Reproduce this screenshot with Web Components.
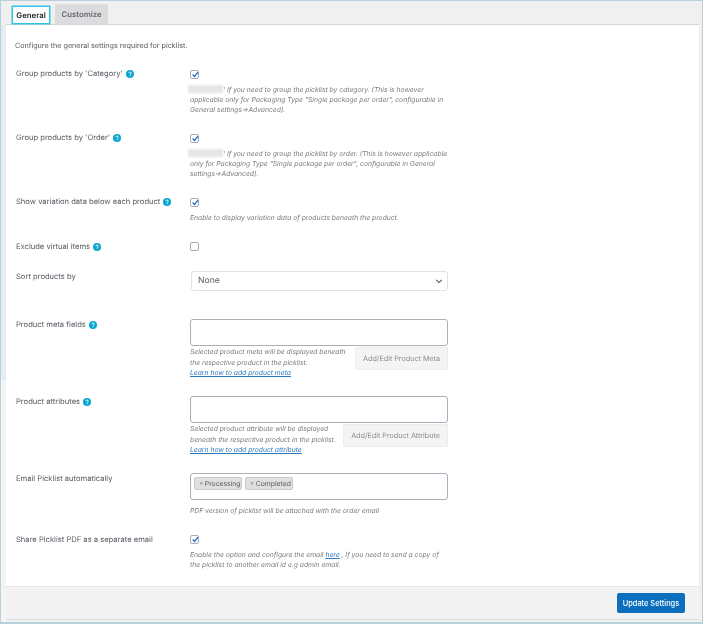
<!DOCTYPE html>
<html>
<head>
<meta charset="utf-8">
<title>Picklist settings</title>
<style>
html, body { margin: 0; padding: 0; background: #f0f0f1; }
body { font-family: Inter, "Liberation Sans", sans-serif; color: #555b62; text-rendering: geometricPrecision; }
</style>
</head>
<body>
<settings-page>
    <settings-tabs slot="tabs"></settings-tabs>
    <settings-panel>
        <p class="intro" slot="intro">Configure the general settings required for picklist.</p>

        <setting-row label="Group products by 'Category'" help gap="17">
            <check-box checked></check-box>
            <field-note><blur-patch></blur-patch>' If you need to group the picklist by category. (This is however applicable only for Packaging Type "Single package per order", configurable in General settings-&gt;Advanced).</field-note>
        </setting-row>

        <setting-row label="Group products by 'Order'" help gap="17">
            <check-box checked></check-box>
            <field-note><blur-patch></blur-patch>' If you need to group the picklist by order. (This is however applicable only for Packaging Type "Single package per order", configurable in General settings-&gt;Advanced).</field-note>
        </setting-row>

        <setting-row label="Show variation data below each product" help gap="18">
            <check-box checked></check-box>
            <field-note>Enable to display variation data of products beneath the product.</field-note>
        </setting-row>

        <setting-row label="Exclude virtual items" help gap="18">
            <check-box></check-box>
        </setting-row>

        <setting-row label="Sort products by" gap="28">
            <select-box value="None"></select-box>
        </setting-row>

        <setting-row label="Product meta fields" help gap="17">
            <text-field></text-field>
            <note-action action="Add/Edit Product Meta" link="Learn how to add product meta" reserve="5">Selected product meta will be displayed beneath the respective product in the picklist.</note-action>
        </setting-row>

        <setting-row label="Product attributes" help gap="17">
            <text-field></text-field>
            <note-action action="Add/Edit Product Attribute" link="Learn how to add product attribute">Selected product attribute will be displayed beneath the respective product in the picklist.</note-action>
        </setting-row>

        <setting-row label="Email Picklist automatically" gap="17">
            <text-field>
                <status-tag>Processing</status-tag>
                <status-tag>Completed</status-tag>
            </text-field>
            <field-note>PDF version of picklist will be attached with the order email</field-note>
        </setting-row>

        <setting-row label="Share Picklist PDF as a separate email" gap="16">
            <check-box checked></check-box>
            <field-note>Enable the option and configure the email <a href="#">here</a> , If you need to send a copy of the picklist to another email id e.g admin email.</field-note>
        </setting-row>

        <panel-footer slot="footer">Update Settings</panel-footer>
    </settings-panel>
</settings-page>

<script>
// outer frame of the screenshot: blue hairline, grey page, tab strip on top
class SettingsPage extends HTMLElement {
    constructor() {
        super();
        this.attachShadow({ mode: 'open' });
        this.shadowRoot.innerHTML = `
            <style>
                :host {
                    display: block;
                    box-sizing: border-box;
                    width: 703px;
                    height: 624px;
                    overflow: hidden;
                    background:
                        linear-gradient(to bottom, #f0f0f1 24px, #e6edf1 24px, #e6edf1 379px, #f4f4f5 379px) left top / 5px 100% no-repeat,
                        #f0f0f1;
                    border: 1px solid #b8cfdc;
                    border-bottom-width: 2px;
                    padding-left: 5px;
                    padding-right: 3px;
                    font-size: 7.6px;
                    filter: blur(0.4px);
                }
            </style>
            <slot name="tabs"></slot>
            <slot></slot>
        `;
    }
}

class SettingsTabs extends HTMLElement {
    constructor() {
        super();
        this.attachShadow({ mode: 'open' });
        this.shadowRoot.innerHTML = `
            <style>
                :host {
                    display: flex;
                    align-items: flex-end;
                    gap: 5px;
                    height: 23px;
                    padding-left: 6px;
                    border-bottom: 1px solid #d5d6d8;
                    font-weight: 600;
                    font-size: 7.8px;
                }
                div {
                    box-sizing: border-box;
                    display: flex;
                    align-items: center;
                    justify-content: center;
                }
                .on {
                    width: 38px;
                    height: 18px;
                    margin-bottom: .5px;
                    background: #fff;
                    color: #1d2327;
                    border: 1px solid #2ec4e4;
                    box-shadow: 0 0 0 .5px #2ec4e4;
                }
                .off {
                    width: 53px;
                    height: 20px;
                    background: #dcdcde;
                    color: #646970;
                }
            </style>
            <div class="on">General</div>
            <div class="off">Customize</div>
        `;
    }
}

class SettingsPanel extends HTMLElement {
    constructor() {
        super();
        this.attachShadow({ mode: 'open' });
        this.shadowRoot.innerHTML = `
            <style>
                :host {
                    display: block;
                    background: #fff;
                }
                .top { padding: 16px 0 17px 9px; font-size: 7.2px; line-height: 10px; }
                ::slotted(p) { margin: 0; }
                .rows { padding-left: 10px; height: 518px; }
            </style>
            <div class="top"><slot name="intro"></slot></div>
            <div class="rows"><slot></slot></div>
            <slot name="footer"></slot>
        `;
    }
}

class SettingRow extends HTMLElement {
    constructor() {
        super();
        this.attachShadow({ mode: 'open' });
        this.shadowRoot.innerHTML = `
            <style>
                :host {
                    display: grid;
                    grid-template-columns: 174px 258px;
                }
                .label {
                    display: flex;
                    align-items: center;
                    gap: 3px;
                    height: 12px;
                    line-height: 12px;
                    white-space: nowrap;
                }
                svg { width: 8px; height: 8px; flex: none; }
                .ctrl { display: block; }
            </style>
            <div class="label"><span class="txt"></span></div>
            <div class="ctrl"><slot></slot></div>
        `;
    }

    connectedCallback() {
        this.shadowRoot.querySelector('.txt').textContent = this.getAttribute('label');
        if (this.hasAttribute('help')) {
            this.shadowRoot.querySelector('.label').insertAdjacentHTML('beforeend', `
                <svg viewBox="0 0 16 16">
                    <circle cx="8" cy="8" r="8" fill="#0aa5cf"/>
                    <path d="M5.6 6.2c0-1.4 1.1-2.2 2.5-2.2s2.4.8 2.4 2.1c0 1.9-2.2 1.9-2.2 3.6" fill="none" stroke="#fff" stroke-width="1.7"/>
                    <rect x="7.4" y="10.8" width="1.8" height="1.8" fill="#fff"/>
                </svg>`);
        }
        this.style.paddingBottom = (this.getAttribute('gap') || 0) + 'px';
    }
}

class CheckBox extends HTMLElement {
    constructor() {
        super();
        this.attachShadow({ mode: 'open' });
        this.shadowRoot.innerHTML = `
            <style>
                :host {
                    display: block;
                    box-sizing: border-box;
                    width: 9px;
                    height: 9px;
                    margin: 1.5px 0 1.5px;
                    background: #fff;
                    border: 1px solid #a3adb8;
                    border-radius: 2px;
                    position: relative;
                }
                svg { position: absolute; left: -.5px; top: -1px; width: 8.5px; height: 8.5px; }
            </style>
        `;
    }

    connectedCallback() {
        if (this.hasAttribute('checked')) {
            this.shadowRoot.innerHTML += `
                <svg viewBox="0 0 12 12">
                    <path d="M2.4 6.3 5 9 10 3" fill="none" stroke="#2274c9" stroke-width="2"/>
                </svg>`;
        }
    }
}

class FieldNote extends HTMLElement {
    constructor() {
        super();
        this.attachShadow({ mode: 'open' });
        this.shadowRoot.innerHTML = `
            <style>
                :host {
                    display: block;
                    margin-top: 6px;
                    font-style: italic;
                    font-size: 6.75px;
                    line-height: 10.2px;
                    color: #7a7a7a;
                }
                ::slotted(a) { color: #2b78bd; }
            </style>
            <slot></slot>
        `;
    }
}

// the grey smudge where the source screenshot was redacted
class BlurPatch extends HTMLElement {
    constructor() {
        super();
        this.attachShadow({ mode: 'open' });
        this.shadowRoot.innerHTML = `
            <style>
                :host {
                    display: inline-block;
                    width: 35px;
                    height: 8px;
                    margin-left: -2px;
                    vertical-align: -1px;
                    background: #e6e6e6;
                    filter: blur(1px);
                }
            </style>
        `;
    }
}

class SelectBox extends HTMLElement {
    constructor() {
        super();
        this.attachShadow({ mode: 'open' });
        this.shadowRoot.innerHTML = `
            <style>
                :host {
                    display: flex;
                    align-items: center;
                    justify-content: space-between;
                    box-sizing: border-box;
                    width: 257px;
                    height: 20px;
                    margin: 0 0 0 1px;
                    padding: 0 4px 0 6px;
                    border: 1px solid #dfe1e5;
                    border-radius: 3px;
                    font-size: 8.6px;
                }
                svg { width: 8px; height: 8px; }
            </style>
            <span></span>
            <svg viewBox="0 0 10 10"><path d="M1.5 3.5 5 7l3.5-3.5" fill="none" stroke="#50575e" stroke-width="1.3"/></svg>
        `;
    }

    connectedCallback() {
        this.shadowRoot.querySelector('span').textContent = this.getAttribute('value');
    }
}

class TextField extends HTMLElement {
    constructor() {
        super();
        this.attachShadow({ mode: 'open' });
        this.shadowRoot.innerHTML = `
            <style>
                :host {
                    display: flex;
                    align-items: flex-start;
                    gap: 3px;
                    box-sizing: border-box;
                    width: 258px;
                    height: 27.5px;
                    padding: 3px;
                    border: 1px solid #a8b0ba;
                    border-radius: 3px;
                    background: #fff;
                }
            </style>
            <slot></slot>
        `;
    }
}

class StatusTag extends HTMLElement {
    constructor() {
        super();
        this.attachShadow({ mode: 'open' });
        this.shadowRoot.innerHTML = `
            <style>
                :host {
                    display: flex;
                    align-items: center;
                    box-sizing: border-box;
                    width: 48px;
                    height: 13px;
                    padding-left: 4px;
                    gap: 1.5px;
                    background: #e0e0e0;
                    border: 1px solid #c9c9c9;
                    border-radius: 2px;
                    font-size: 6.8px;
                }
                i { font-style: normal; color: #8a8a8a; font-size: 6.5px; }
            </style>
            <i>×</i><slot></slot>
        `;
    }
}

// note text with link on the left, grey button on the right
class NoteAction extends HTMLElement {
    constructor() {
        super();
        this.attachShadow({ mode: 'open' });
        this.shadowRoot.innerHTML = `
            <style>
                :host {
                    display: flex;
                    justify-content: space-between;
                    align-items: flex-start;
                    margin-top: 1px;
                }
                .note {
                    flex: 1 1 0;
                    font-style: italic;
                    font-size: 6.75px;
                    line-height: 10.5px;
                    color: #7a7a7a;
                }
                a { color: #2b78bd; display: block; white-space: nowrap; }
                .btn {
                    flex: none;
                    box-sizing: border-box;
                    display: flex;
                    align-items: center;
                    justify-content: center;
                    height: 23px;
                    padding: 0 7px;
                    background: #f4f4f4;
                    border: 1px solid #ececec;
                    border-radius: 2px;
                    color: #8a8d91;
                    font-size: 7.2px;
                    white-space: nowrap;
                }
            </style>
            <div class="note"><slot></slot><a href="#"></a></div>
            <div class="btn"></div>
        `;
    }

    connectedCallback() {
        this.shadowRoot.querySelector('a').textContent = this.getAttribute('link');
        this.shadowRoot.querySelector('.btn').textContent = this.getAttribute('action');
        this.shadowRoot.querySelector('.note').style.paddingRight = (this.getAttribute('reserve') || 0) + 'px';
    }
}

class PanelFooter extends HTMLElement {
    constructor() {
        super();
        this.attachShadow({ mode: 'open' });
        this.shadowRoot.innerHTML = `
            <style>
                :host {
                    display: flex;
                    justify-content: flex-end;
                    align-items: center;
                    box-sizing: border-box;
                    height: 34px;
                    padding-right: 14px;
                    background: #f3f3f3;
                    border-top: 1px solid #e8e8e8;
                    border-bottom: 1px solid #dcdcde;
                }
                button {
                    width: 68px;
                    height: 20px;
                    padding: 0;
                    background: #0b6fbe;
                    border: 0;
                    border-radius: 2px;
                    color: #fff;
                    font: 500 7.4px Inter, "Liberation Sans", sans-serif;
                }
            </style>
            <button><slot></slot></button>
        `;
    }
}

customElements.define("settings-page", SettingsPage);
customElements.define("settings-tabs", SettingsTabs);
customElements.define("settings-panel", SettingsPanel);
customElements.define("setting-row", SettingRow);
customElements.define("check-box", CheckBox);
customElements.define("field-note", FieldNote);
customElements.define("blur-patch", BlurPatch);
customElements.define("select-box", SelectBox);
customElements.define("text-field", TextField);
customElements.define("status-tag", StatusTag);
customElements.define("note-action", NoteAction);
customElements.define("panel-footer", PanelFooter);
</script>
</body>
</html>
